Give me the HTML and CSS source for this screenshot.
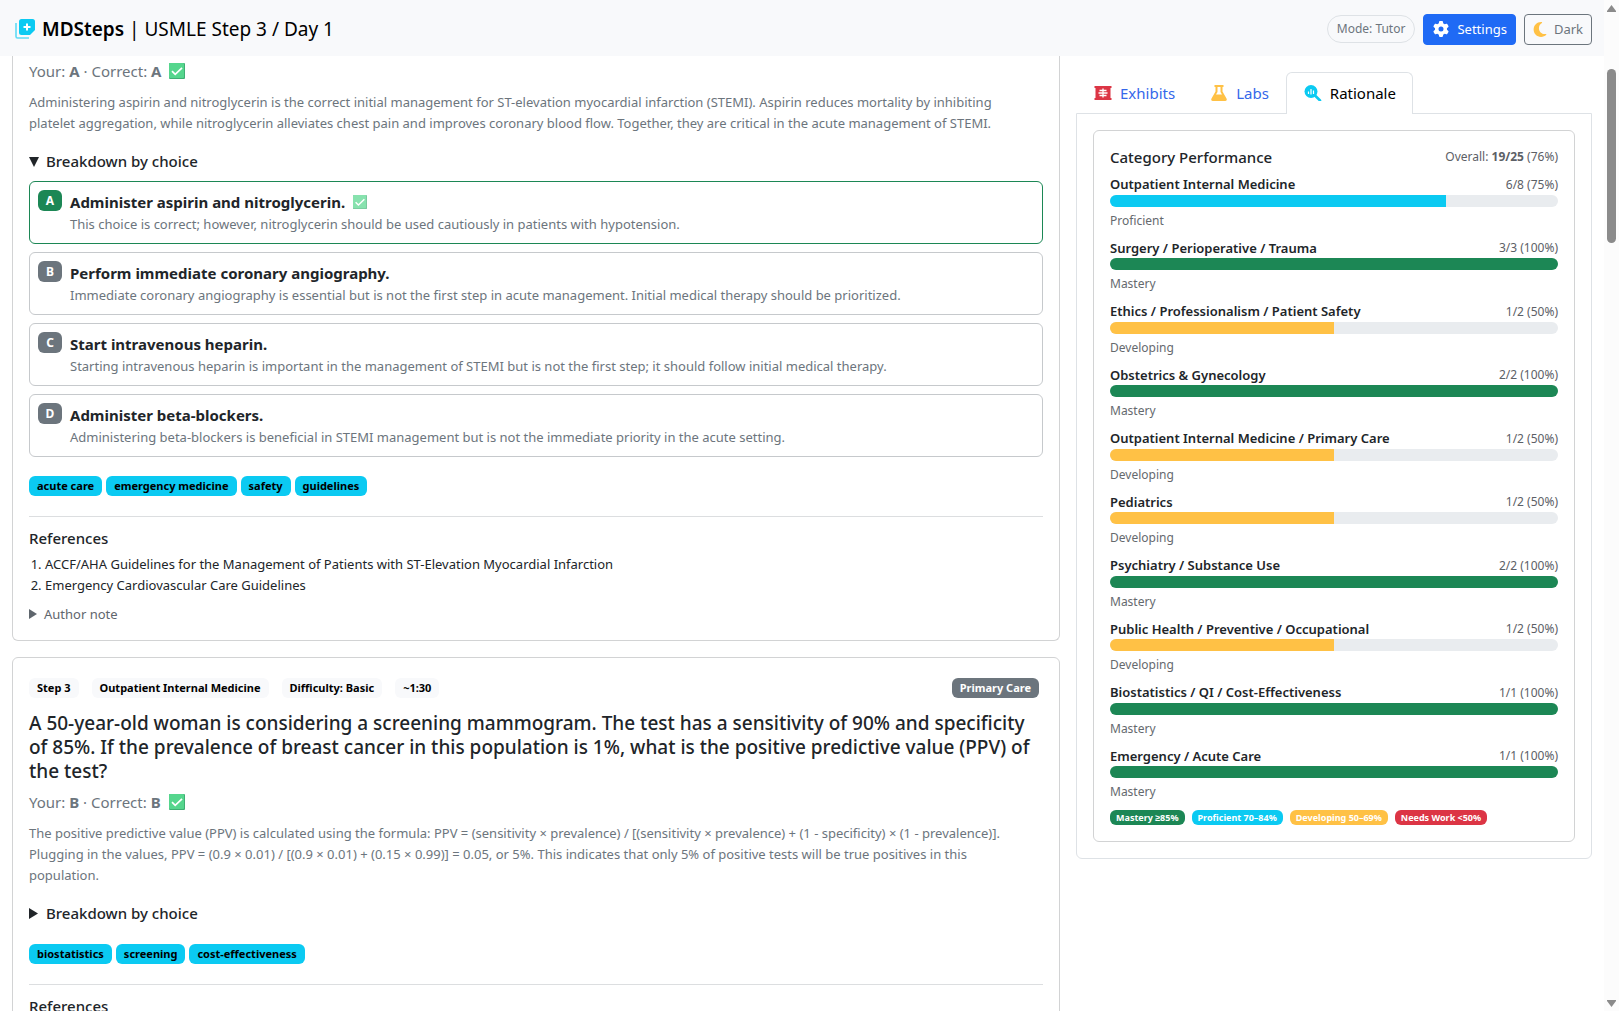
FILE: index.html
```
<!DOCTYPE html>
<html lang="en">
<head>
<meta charset="utf-8">
<meta name="viewport" content="width=device-width, initial-scale=1">
<title>MDSteps | USMLE Step 3 / Day 1</title>
<link rel="stylesheet" href="styles.css">
</head>
<body>
<svg class="sprite" aria-hidden="true">
  <symbol id="check" viewBox="0 0 16 16">
    <rect width="16" height="16" rx="1" fill="#3fae73"/>
    <rect width="15" height="15" rx="1" fill="#55d68d"/>
    <path d="M3 8.2l3.2 3.2L13 4.8" fill="none" stroke="#fff" stroke-width="1.7"/>
  </symbol>
</svg>

<div class="app">
  <header class="topbar">
    <h1 class="brand">
      <svg class="brand-icon" viewBox="0 0 20 20" aria-hidden="true">
        <path d="M1 4v13.5A1.5 1.5 0 0 0 2.500 19H14" fill="none" stroke="#5edbf6" stroke-width="1.600"/>
        <path d="M6.500 0h11A2.500 2.500 0 0 1 20 2.500V11l-5 5H6.500A2.500 2.500 0 0 1 4 13.500v-11A2.500 2.500 0 0 1 6.500 0z" fill="#0bcaf2"/>
        <path d="M12 4.500v7M8.500 8h7" stroke="#fff" stroke-width="2"/>
      </svg>
      <span><strong class="brand-name">MDSteps</strong> | USMLE Step 3 / Day 1</span>
    </h1>
    <div class="actions">
      <span class="mode">Mode: Tutor</span>
      <button class="btn btn-primary" type="button">
        <svg class="icon-gear" viewBox="0 0 512 512" aria-hidden="true"><path fill="currentColor" d="M495.900 166.600c3.200 8.700 .5 18.400-6.400 24.600l-43.300 39.400c1.100 8.300 1.700 16.800 1.700 25.400s-.6 17.100-1.700 25.400l43.300 39.400c6.900 6.200 9.600 15.900 6.400 24.600c-4.400 11.900-9.700 23.300-15.800 34.300l-4.700 8.100c-6.600 11-14 21.400-22.100 31.200c-5.900 7.200-15.700 9.600-24.500 6.800l-55.700-17.700c-13.400 10.300-28.200 18.900-44 25.400l-12.500 57.100c-2 9.100-9 16.300-18.200 17.800c-13.800 2.300-28 3.500-42.500 3.500s-28.700-1.200-42.500-3.500c-9.200-1.500-16.200-8.700-18.200-17.800l-12.500-57.100c-15.800-6.500-30.600-15.100-44-25.400L83.100 425.900c-8.800 2.800-18.600 .3-24.500-6.800c-8.100-9.800-15.500-20.200-22.100-31.200l-4.700-8.100c-6.100-11-11.400-22.400-15.800-34.300c-3.200-8.700-.5-18.400 6.400-24.600l43.300-39.400C64.600 273.100 64 264.600 64 256s.6-17.100 1.700-25.400L22.400 191.200c-6.900-6.200-9.600-15.900-6.400-24.600c4.400-11.900 9.700-23.300 15.800-34.300l4.700-8.100c6.600-11 14-21.400 22.100-31.200c5.900-7.200 15.700-9.600 24.500-6.800l55.700 17.700c13.400-10.300 28.200-18.900 44-25.400l12.500-57.100c2-9.100 9-16.300 18.200-17.800C227.300 1.200 241.500 0 256 0s28.700 1.200 42.500 3.500c9.200 1.500 16.200 8.700 18.200 17.800l12.500 57.100c15.800 6.500 30.600 15.100 44 25.400l55.700-17.700c8.800-2.800 18.600-.3 24.500 6.800c8.100 9.800 15.500 20.200 22.100 31.200l4.700 8.100c6.100 11 11.400 22.400 15.800 34.300zM256 336a80 80 0 1 0 0-160 80 80 0 1 0 0 160z"/></svg>
        Settings
      </button>
      <button class="btn btn-outline" type="button">
        <svg class="icon-moon" viewBox="0 0 384 512" aria-hidden="true"><path fill="#ffc145" d="M223.500 32C100 32 0 132.300 0 256S100 480 223.500 480c60.600 0 115.500-24.200 155.800-63.400c5-4.900 6.300-12.500 3.100-18.700s-10.100-9.700-17-8.500c-9.800 1.700-19.800 2.600-30.100 2.600c-96.900 0-175.500-78.800-175.500-176c0-65.800 36-123.100 89.300-153.300c6.100-3.500 9.200-10.500 7.700-17.300s-7.300-11.900-14.300-12.500c-6.300-.5-12.600-.8-19-.8z"/></svg>
        Dark
      </button>
    </div>
  </header>

  <main class="columns">
    <section class="questions">
      <article class="card card-continued">
        <p class="result">Your: <strong>A</strong> · Correct: <strong>A</strong> <svg class="check" role="img" aria-label="Correct"><use href="#check"/></svg></p>
        <p class="explanation">Administering aspirin and nitroglycerin is the correct initial management for ST-elevation myocardial infarction (STEMI). Aspirin reduces mortality by inhibiting platelet aggregation, while nitroglycerin alleviates chest pain and improves coronary blood flow. Together, they are critical in the acute management of STEMI.</p>
        <details class="breakdown" open>
          <summary>Breakdown by choice</summary>
          <ul class="choices">
            <li class="choice choice-correct">
              <span class="letter">A</span>
              <div><h3>Administer aspirin and nitroglycerin. <svg class="check check-small" role="img" aria-label="Correct"><use href="#check"/></svg></h3><p>This choice is correct; however, nitroglycerin should be used cautiously in patients with hypotension.</p></div>
            </li>
            <li class="choice">
              <span class="letter">B</span>
              <div><h3>Perform immediate coronary angiography.</h3><p>Immediate coronary angiography is essential but is not the first step in acute management. Initial medical therapy should be prioritized.</p></div>
            </li>
            <li class="choice">
              <span class="letter">C</span>
              <div><h3>Start intravenous heparin.</h3><p>Starting intravenous heparin is important in the management of STEMI but is not the first step; it should follow initial medical therapy.</p></div>
            </li>
            <li class="choice">
              <span class="letter">D</span>
              <div><h3>Administer beta-blockers.</h3><p>Administering beta-blockers is beneficial in STEMI management but is not the immediate priority in the acute setting.</p></div>
            </li>
          </ul>
        </details>
        <div class="tags">
          <span class="badge badge-tag">acute care</span>
          <span class="badge badge-tag">emergency medicine</span>
          <span class="badge badge-tag">safety</span>
          <span class="badge badge-tag">guidelines</span>
        </div>
        <hr>
        <h3 class="references-title">References</h3>
        <ol class="references">
          <li>ACCF/AHA Guidelines for the Management of Patients with ST-Elevation Myocardial Infarction</li>
          <li>Emergency Cardiovascular Care Guidelines</li>
        </ol>
        <details class="author-note"><summary>Author note</summary></details>
      </article>

      <article class="card">
        <div class="meta">
          <span class="badge badge-light">Step 3</span>
          <span class="badge badge-light">Outpatient Internal Medicine</span>
          <span class="badge badge-light">Difficulty: Basic</span>
          <span class="badge badge-light">~1:30</span>
          <span class="badge badge-setting">Primary Care</span>
        </div>
        <h2 class="question">A 50-year-old woman is considering a screening mammogram. The test has a sensitivity of 90% and specificity of 85%. If the prevalence of breast cancer in this population is 1%, what is the positive predictive value (PPV) of the test?</h2>
        <p class="result">Your: <strong>B</strong> · Correct: <strong>B</strong> <svg class="check" role="img" aria-label="Correct"><use href="#check"/></svg></p>
        <p class="explanation">The positive predictive value (PPV) is calculated using the formula: PPV = (sensitivity × prevalence) / [(sensitivity × prevalence) + (1 - specificity) × (1 - prevalence)]. Plugging in the values, PPV = (0.9 × 0.01) / [(0.9 × 0.01) + (0.15 × 0.99)] = 0.05, or 5%. This indicates that only 5% of positive tests will be true positives in this population.</p>
        <details class="breakdown"><summary>Breakdown by choice</summary></details>
        <div class="tags">
          <span class="badge badge-tag">biostatistics</span>
          <span class="badge badge-tag">screening</span>
          <span class="badge badge-tag">cost-effectiveness</span>
        </div>
        <hr>
        <h3 class="references-title">References</h3>
      </article>
    </section>

    <aside class="side">
      <nav class="tabs">
        <a class="tab" href="#exhibits">
          <svg class="tab-icon" viewBox="0 0 20 16" aria-hidden="true"><path fill="#dc3545" d="M1.500 1h17v2h-1v10h1v2h-17v-2h1V3h-1z"/><path d="M10 3.500v9M6.500 5.500h7M5.500 8h9M6.500 10.500h7" stroke="#fff" stroke-width="1.300"/></svg>Exhibits</a>
        <a class="tab" href="#labs">
          <svg class="tab-icon" viewBox="0 0 20 16" aria-hidden="true"><path fill="#ffc145" d="M5.500 0h9v2h-1v4.500l4 7c.8 1.300 0 2.500-1.300 2.500H3.800C2.500 16 1.700 14.800 2.500 13.500l4-7V2h-1z"/><path fill="#fff" d="M8.500 2h3v5l1.500 2.500H7L8.500 7z"/></svg>Labs</a>
        <a class="tab tab-active" href="#rationale" aria-current="page">
          <svg class="tab-icon" viewBox="0 0 20 16" aria-hidden="true"><circle cx="8" cy="6.500" r="6.500" fill="#0bcaf2"/><path d="M12 10.500l5 5" stroke="#0bcaf2" stroke-width="2.600" stroke-linecap="round"/><path d="M5.500 6.500V9M8 4v5.500M10.500 5.500V9" stroke="#fff" stroke-width="1.200"/></svg>Rationale</a>
      </nav>
      <div class="pane">
        <section class="performance">
          <div class="line performance-head"><h2>Category Performance</h2><span class="score">Overall: <strong>19/25</strong> (76%)</span></div>
          <ul class="categories">
            <li><div class="line"><h3>Outpatient Internal Medicine</h3><span class="score">6/8 (75%)</span></div><div class="bar"><div class="fill proficient" style="width:75%"></div></div><p>Proficient</p></li>
            <li><div class="line"><h3>Surgery / Perioperative / Trauma</h3><span class="score">3/3 (100%)</span></div><div class="bar"><div class="fill mastery" style="width:100%"></div></div><p>Mastery</p></li>
            <li><div class="line"><h3>Ethics / Professionalism / Patient Safety</h3><span class="score">1/2 (50%)</span></div><div class="bar"><div class="fill developing" style="width:50%"></div></div><p>Developing</p></li>
            <li><div class="line"><h3>Obstetrics &amp; Gynecology</h3><span class="score">2/2 (100%)</span></div><div class="bar"><div class="fill mastery" style="width:100%"></div></div><p>Mastery</p></li>
            <li><div class="line"><h3>Outpatient Internal Medicine / Primary Care</h3><span class="score">1/2 (50%)</span></div><div class="bar"><div class="fill developing" style="width:50%"></div></div><p>Developing</p></li>
            <li><div class="line"><h3>Pediatrics</h3><span class="score">1/2 (50%)</span></div><div class="bar"><div class="fill developing" style="width:50%"></div></div><p>Developing</p></li>
            <li><div class="line"><h3>Psychiatry / Substance Use</h3><span class="score">2/2 (100%)</span></div><div class="bar"><div class="fill mastery" style="width:100%"></div></div><p>Mastery</p></li>
            <li><div class="line"><h3>Public Health / Preventive / Occupational</h3><span class="score">1/2 (50%)</span></div><div class="bar"><div class="fill developing" style="width:50%"></div></div><p>Developing</p></li>
            <li><div class="line"><h3>Biostatistics / QI / Cost-Effectiveness</h3><span class="score">1/1 (100%)</span></div><div class="bar"><div class="fill mastery" style="width:100%"></div></div><p>Mastery</p></li>
            <li><div class="line"><h3>Emergency / Acute Care</h3><span class="score">1/1 (100%)</span></div><div class="bar"><div class="fill mastery" style="width:100%"></div></div><p>Mastery</p></li>
          </ul>
          <div class="legend">
            <span class="mastery">Mastery ≥85%</span>
            <span class="proficient">Proficient 70–84%</span>
            <span class="developing">Developing 50–69%</span>
            <span class="needs-work">Needs Work &lt;50%</span>
          </div>
        </section>
      </div>
    </aside>
  </main>
</div>

<div class="scrollbar" aria-hidden="true">
  <svg class="arrow" viewBox="0 0 9 7"><path d="M4.500 0L9 6v1H0V6z"/></svg>
  <div class="track"><div class="thumb"></div></div>
  <svg class="arrow" viewBox="0 0 9 7"><path d="M4.500 7L0 1V0h9v1z"/></svg>
</div>
</body>
</html>
```
FILE: styles.css
```
* { box-sizing: border-box; }

:root {
  --ink: #212529;
  --muted: #6c757d;
  --line: #dee2e6;
  --card-line: #d2d3d4;
  --cyan: #0bcaf2;
  --green: #1c8755;
  --yellow: #ffc145;
  --red: #dc3545;
  --blue: #1f6af5;
}

body {
  margin: 0;
  height: 100vh;
  display: flex;
  overflow: hidden;
  font-family: "Noto Sans", "Segoe UI", sans-serif;
  font-size: 15px;
  line-height: 24px;
  color: var(--ink);
  background: #fff;
}

h1, h2, h3, p, ul, ol { margin: 0; padding: 0; font-size: inherit; font-weight: inherit; }
ul { list-style: none; }
.sprite { display: none; }

.app {
  flex: 1;
  min-width: 0;
  display: flex;
  flex-direction: column;
}

/* Top bar */
.topbar {
  flex: none;
  height: 56px;
  padding: 2px 12px 0;
  display: flex;
  align-items: center;
  justify-content: space-between;
  background: #f8f9fb;
}
.brand {
  display: flex;
  align-items: center;
  gap: 7px;
  font-size: 19px;
  color: #000;
}
.brand-icon { width: 20px; height: 20px; margin-left: 3px; }
.brand-name { font-weight: 600; }
.actions { display: flex; align-items: center; gap: 8px; }
.mode {
  padding: 3px 9px;
  border: 1px solid var(--line);
  border-radius: 14px;
  font-size: 12px;
  line-height: 20px;
  color: var(--muted);
}
.btn {
  display: flex;
  align-items: center;
  gap: 7px;
  padding: 4px 8px;
  border: 1px solid;
  border-radius: 4px;
  font: inherit;
  font-size: 13px;
  line-height: 21px;
}
.btn-primary { background: var(--blue); border-color: var(--blue); color: #fff; }
.btn-outline { background: transparent; border-color: var(--muted); color: var(--muted); }
.icon-gear { width: 18px; height: 16px; }
.icon-moon { width: 14px; height: 17px; }

/* Page columns */
.columns {
  flex: 1;
  min-height: 0;
  display: grid;
  grid-template-columns: minmax(0, 2fr) minmax(0, 1fr);
  margin: 0 4px;
  overflow: hidden;
}
.questions { padding: 0 8px; }
.side { padding: 16px 8px; }

/* Question cards */
.card {
  margin-bottom: 16px;
  padding: 16px;
  border: 1px solid var(--card-line);
  border-radius: 6px;
}
.card-continued {
  padding-top: 3px;
  border-top: 0;
  border-top-left-radius: 0;
  border-top-right-radius: 0;
}
.result { margin-bottom: 9px; color: var(--muted); }
.check { width: 16px; height: 16px; margin-left: 4px; vertical-align: -2px; }
.check-small { width: 14px; height: 14px; vertical-align: -1px; opacity: .7; }
.explanation { margin-bottom: 16px; padding-right: 8px; font-size: 13px; line-height: 21px; color: var(--muted); }

summary {
  display: flex;
  align-items: center;
  list-style: none;
  cursor: pointer;
}
summary::before {
  content: "";
  width: 8px;
  height: 10px;
  margin-right: 7px;
  background: currentColor;
  clip-path: polygon(0 0, 100% 50%, 0 100%);
}
.breakdown summary { font-weight: 500; line-height: 23px; }
.breakdown summary::before { width: 9px; height: 11px; margin-right: 8px; }
.breakdown[open] summary::before { width: 10px; margin-right: 7px; clip-path: polygon(0 10%, 100% 10%, 50% 100%); }
.choices { display: grid; gap: 8px; margin-top: 8px; }
.choice {
  display: flex;
  align-items: flex-start;
  gap: 8px;
  padding: 8px;
  border: 1px solid #c6c9cc;
  border-radius: 6px;
}
.choice-correct { border-color: var(--green); }
.choice h3 { font-weight: 700; }
.choice p { font-size: 13px; line-height: 21px; color: var(--muted); }
.letter {
  flex: none;
  width: 24px;
  border-radius: 6px;
  background: var(--muted);
  color: #fff;
  font-size: 12px;
  font-weight: 700;
  line-height: 21px;
  text-align: center;
}
.choice-correct .letter { background: var(--green); }

.badge {
  padding: 0 8px;
  border-radius: 6px;
  font-size: 11px;
  font-weight: 700;
  line-height: 20px;
  white-space: nowrap;
}
.badge-tag { background: var(--cyan); color: #000; }
.badge-light { background: #f8f9fb; color: #000; }
.badge-setting { margin: 0 4px 0 auto; background: var(--muted); color: #fff; }
.tags { display: flex; flex-wrap: wrap; gap: 4px; margin: 19px 0 20px; }
hr { margin: 0 0 9px; border: 0; border-top: 1px solid #dcdee0; }
.references-title { margin-bottom: 4px; font-weight: 500; }
.references { margin-bottom: 8px; padding-left: 16px; font-size: 13px; line-height: 21px; }
.author-note { font-size: 13px; line-height: 20px; color: #5f666d; }

.meta { display: flex; align-items: center; gap: 13px; padding: 4px 0 13px; }
.question { margin-bottom: 7px; font-size: 19px; font-weight: 500; }

/* Side panel */
.tabs { display: flex; }
.tab {
  display: flex;
  align-items: center;
  gap: 7px;
  padding: 8px 16px;
  border: 1px solid transparent;
  border-bottom: 0;
  border-radius: 6px 6px 0 0;
  color: #3467ea;
  text-decoration: none;
}
.tab-active {
  position: relative;
  margin-bottom: -1px;
  padding-bottom: 9px;
  border-color: var(--line);
  background: #fff;
  color: #000;
}
.tab-icon { width: 20px; height: 16px; }
.pane {
  padding: 16px;
  border: 1px solid var(--line);
  border-radius: 0 0 6px 6px;
}
.performance {
  padding: 16px;
  border: 1px solid var(--card-line);
  border-radius: 6px;
  line-height: 1.5;
}
.line { display: flex; align-items: center; justify-content: space-between; }
.performance-head { margin-bottom: 8px; line-height: 20px; }
.performance-head h2 { font-size: 15px; font-weight: 500; }
.score { font-size: 12px; color: #5c6066; }
.categories { display: grid; gap: 9px; }
.categories h3 { font-size: 13px; font-weight: 600; }
.categories p { margin-top: 5px; font-size: 12px; color: #65696e; }
.bar {
  height: 12px;
  border-radius: 6px;
  overflow: hidden;
  background: #e9ecef;
}
.fill { height: 100%; }
.mastery { background: var(--green); }
.proficient { background: var(--cyan); }
.developing { background: var(--yellow); }
.needs-work { background: var(--red); }
.legend { display: flex; flex-wrap: wrap; gap: 7px; margin-top: 9px; }
.legend span {
  padding: 0 6px;
  border-radius: 6px;
  color: #fff;
  font-size: 9px;
  font-weight: 700;
  line-height: 15px;
}

/* Scroll bar */
.scrollbar {
  flex: none;
  width: 15px;
  padding: 5px 3px 4px;
  display: flex;
  flex-direction: column;
  background: #fcfcfc;
}
.arrow { width: 9px; height: 7px; fill: #8b8b8b; }
.track { flex: 1; padding-top: 57px; }
.thumb { height: 174px; border-radius: 5px; background: #8b8b8b; }
```
